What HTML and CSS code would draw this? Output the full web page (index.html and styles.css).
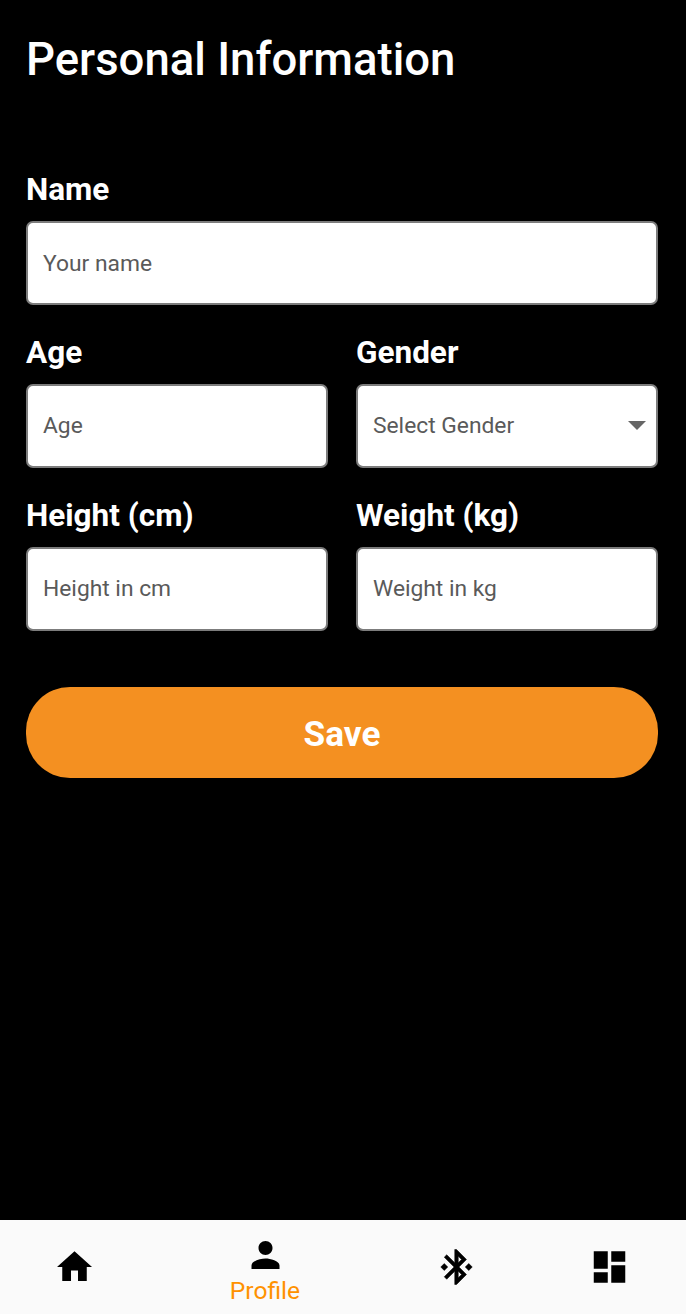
FILE: index.html
```html
<!DOCTYPE html>
<html lang="en">
<head>
<meta charset="utf-8">
<title>Personal Information</title>
<link rel="stylesheet" href="styles.css">
</head>
<body>
<main class="screen">
  <h1 class="title">Personal Information</h1>
  <div class="form">
    <div class="field wide"><div class="label">Name</div><div class="input name-input">Your name</div></div>
    <div class="field"><div class="label">Age</div><div class="input">Age</div></div>
    <div class="field"><div class="label">Gender</div><div class="input select"><span>Select Gender</span><svg class="caret" viewBox="0 0 18 9"><path d="M0 0h18L9 9z"/></svg></div></div>
    <div class="field"><div class="label">Height (cm)</div><div class="input">Height in cm</div></div>
    <div class="field"><div class="label">Weight (kg)</div><div class="input">Weight in kg</div></div>
  </div>
  <div class="save">Save</div>
</main>
<nav class="nav">
  <div class="tab home"><svg class="icon" viewBox="0.28 0 24 24"><path d="M10 20v-6h4v6h5v-8h3L12 3 2 12h3v8z"/></svg></div>
  <div class="tab profile"><svg class="icon" viewBox="0.28 0 24 24"><path d="M12 12c2.21 0 4-1.79 4-4s-1.79-4-4-4-4 1.790-4 4 1.790 4 4 4zm0 2c-2.670 0-8 1.340-8 4v2h16v-2c0-2.660-5.330-4-8-4z"/></svg><span class="tab-label">Profile</span></div>
  <div class="tab bluetooth"><svg class="icon" viewBox="0.28 0 24 24"><path class="bold" d="M7 12l-2-2-2 2 2 2 2-2zm10.710-4.290L12 2h-1v7.590L6.410 5 5 6.410 10.590 12 5 17.590 6.410 19 11 14.410V22h1l5.710-5.710-4.300-4.290 4.300-4.290zM13 5.830l1.880 1.880L13 9.590V5.830zm1.880 10.460L13 18.170v-3.760l1.880 1.880zM19 10l-2 2 2 2 2-2-2-2z"/></svg></div>
  <div class="tab dashboard"><svg class="icon" viewBox="0.28 0 24 24"><path d="M3 13h8V3H3v10zm0 8h8v-6H3v6zm10 0h8V11h-8v10zm0-18v6h8V3h-8z"/></svg></div>
</nav>
</body>
</html>
```
FILE: styles.css
```css
* { box-sizing: border-box; }
body {
  margin: 0;
  height: 1314px;
  display: flex;
  flex-direction: column;
  background: #000;
  color: #fff;
  font-family: Roboto, sans-serif;
}
.screen { flex: 1; padding: 33px 28px 0 26px; }
.title { margin: 0; font-size: 45.5px; line-height: 54px; font-weight: 500; white-space: nowrap; }
.form {
  margin-top: 83px;
  display: grid;
  grid-template-columns: 302px 302px;
  column-gap: 28px;
  row-gap: 28px;
}
.wide { grid-column: 1 / 3; }
.label { height: 51px; line-height: 40px; font-size: 31.5px; font-weight: 700; }
.input {
  height: 84px;
  padding: 0 10px 2px 15px;
  border: 2px solid #7c7c7c;
  border-radius: 7px;
  background: #fff;
  color: #5a5a5a;
  font-size: 22.8px;
  display: flex;
  align-items: center;
}
.name-input { padding-bottom: 0; }
.select { justify-content: space-between; }
.caret { width: 18px; height: 9px; fill: #666; }
.save {
  margin-top: 56px;
  height: 91px;
  border-radius: 44px;
  background: #f49021;
  font-size: 35.2px;
  font-weight: 700;
  line-height: 94px;
  text-align: center;
}
.nav { height: 94px; background: #fafafa; color: #000; display: flex; }
.tab { display: flex; flex-direction: column; align-items: center; justify-content: center; }
.icon { width: 42px; height: 42px; fill: #000; flex: none; display: block; }
.bold { stroke: #000; stroke-width: 0.3; stroke-linejoin: round; }
.home { width: 150px; }
.profile { width: 232px; justify-content: flex-start; padding-top: 14px; }
.bluetooth { width: 150px; }
.dashboard { width: 154px; padding-left: 2px; }
.tab-label { margin-right: 2px; color: #ff9100; font-size: 24.6px; line-height: 29px; }
```
